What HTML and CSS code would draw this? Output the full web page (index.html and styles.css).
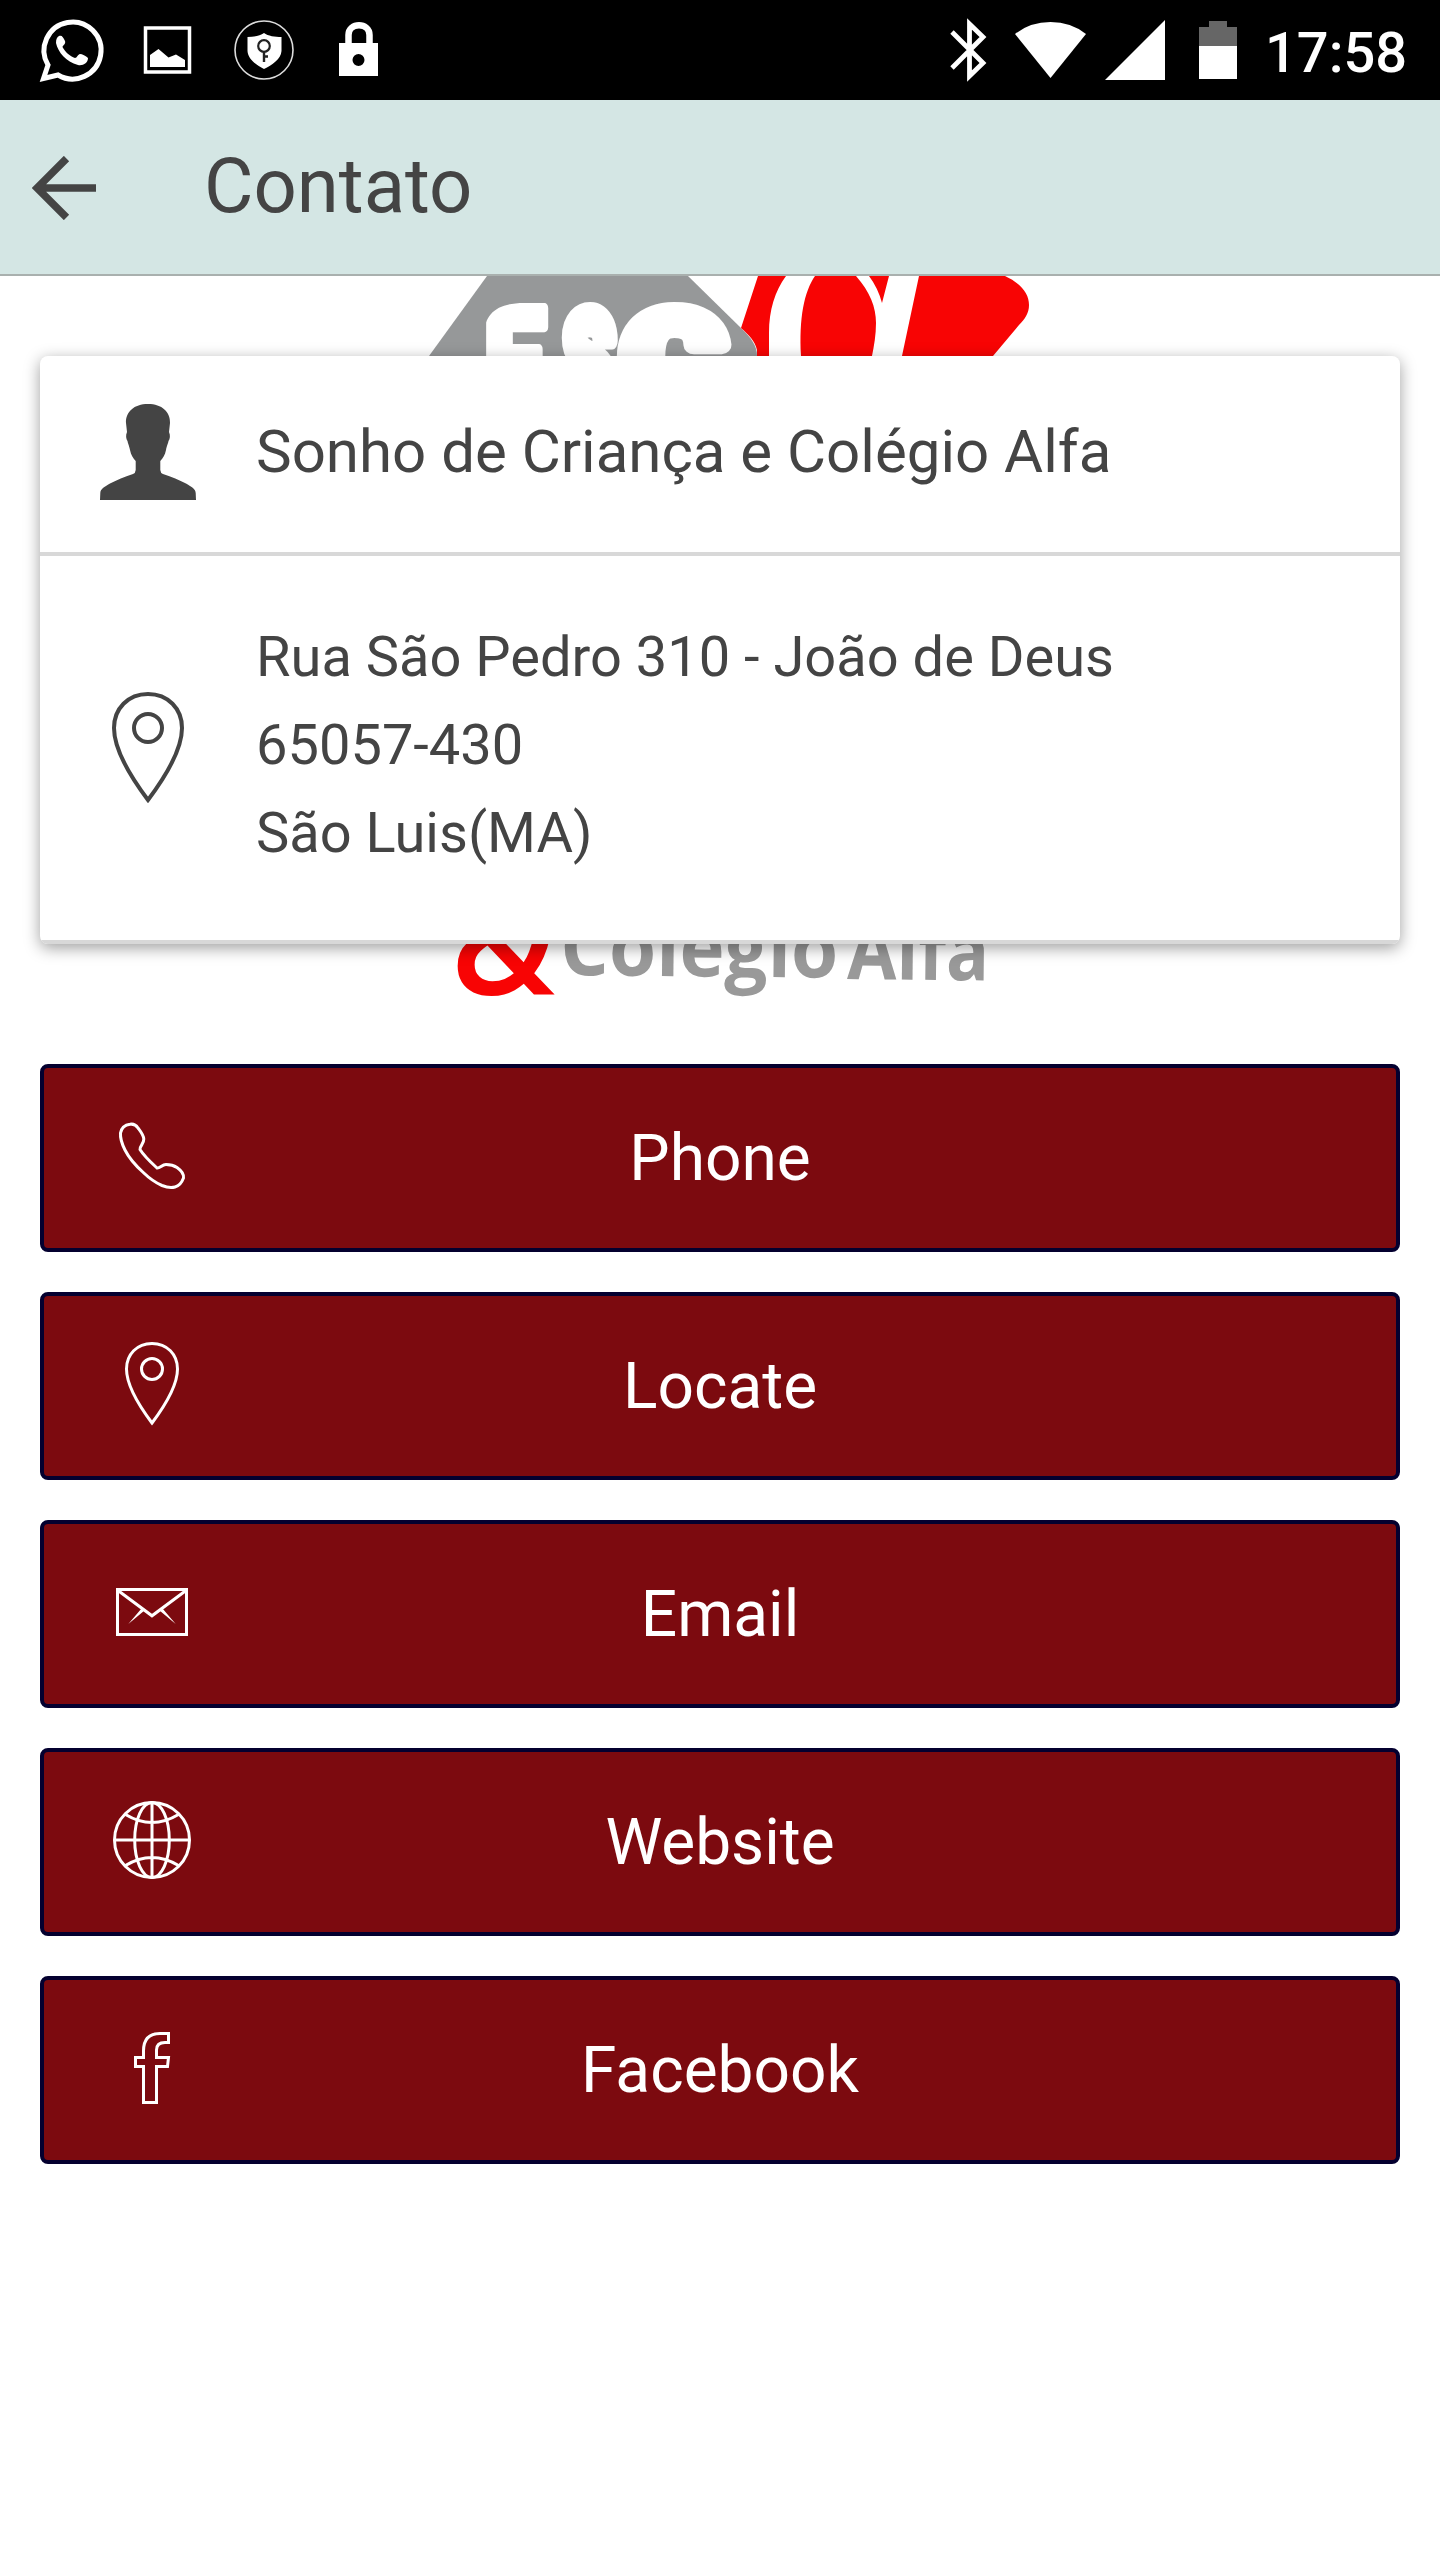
FILE: index.html
```html
<!DOCTYPE html>
<html lang="pt-BR">
<head>
<meta charset="utf-8">
<title>Contato</title>
<link rel="stylesheet" href="styles.css">
</head>
<body>
<div class="status-bar">
  <div class="status-group">
    <svg class="notice" viewBox="24 0 96 100">
      <path d="M43.500 78.500L48 65A28.500 28.500 0 1 1 58 75Z" fill="none" stroke="#fff" stroke-width="5"/>
      <path d="M59 36C62 35 63 37 65 41C66 44 63 45 62.500 47C65 52 70 56 75 58C77 58 78 54 80 54C82 54 86 56 88 58C88 63 83 66 78 65C66 62 58 52 56 43C56 39 57 37 59 36Z" fill="#fff"/>
    </svg>
    <svg class="notice" viewBox="24 0 96 100">
      <path d="M49.500 28H93.500V72H49.500Z" fill="none" stroke="#fff" stroke-width="3.500"/>
      <path d="M54 55L62.500 49L72.500 57.500L80 54.500L89 60V67H54Z" fill="#fff"/>
    </svg>
    <svg class="notice" viewBox="216 0 96 100">
      <circle cx="264" cy="50" r="29" fill="none" stroke="#ddd" stroke-width="1.600"/>
      <path d="M264 33C268 36 275 37 281.500 37V51C281 59 272 65 264 69C256 65 248 59 247.500 51V37C254 37 260 36 264 33Z" fill="#fff"/>
      <circle cx="264" cy="46" r="5.800" fill="none" stroke="#222" stroke-width="2.200"/>
      <path d="M264 52V62M264 56.500H268" stroke="#222" stroke-width="2.400" fill="none"/>
    </svg>
    <svg class="notice" viewBox="312 0 96 100">
      <path d="M348.500 45V35C348.500 22 369.500 22 369.500 35V45" fill="none" stroke="#fff" stroke-width="6.500"/>
      <path fill="#fff" fill-rule="evenodd" d="M339 43H378V76H339ZM358.500 54A6 6 0 1 0 358.500 66A6 6 0 1 0 358.500 54Z"/>
    </svg>
  </div>
  <div class="status-group">
    <svg class="signal" viewBox="926 0 84 100">
      <path d="M952 32L969.500 49.500L983 63L969.500 76V24L983 37L952 68" fill="none" stroke="#fff" stroke-width="4.800"/>
    </svg>
    <svg class="signal" viewBox="1010 0 84 100">
      <path d="M1015 34Q1030 22 1050.500 22T1086 34L1050.500 78Z" fill="#fff"/>
    </svg>
    <svg class="signal" viewBox="1094 0 84 100">
      <path d="M1105 80L1165 20V80Z" fill="#fff"/>
    </svg>
    <svg class="signal" viewBox="1178 0 84 100">
      <path d="M1209 21H1227V27H1237V46H1199V27H1209Z" fill="#666"/>
      <path d="M1199 46H1237V79H1199Z" fill="#fff"/>
    </svg>
    <span class="clock">17:58</span>
  </div>
</div>

<header class="app-bar">
  <svg class="back" viewBox="0 0 64 64"><path d="M34.500 2.500L5 32L34.500 61.500M4 32H64" fill="none" stroke="#444" stroke-width="7.500"/></svg>
  <h1 class="title">Contato</h1>
</header>

<main class="page">
  <svg class="logo" viewBox="400 276 660 764">
    <path d="M487 276H688L741 328C751 338 757 345 757 356V370H420L429 356Z" fill="#969899"/>
    <path d="M758 276H1005C1022 284 1029 294 1029 305C1029 313 1025 319 1019 325L993 356L982 370H757V350C755 341 749 335 741 328Z" fill="#f80404"/>
    <path d="M786 276C775 291 769 310 769 333V370H801V356C799 318 804 292 815 276Z" fill="#fff"/>
    <path d="M856 276C870 292 876 307 876 323C876 335 874 346 872 356L870 370H899L919 276H889L882 303Q878 288 869 276Z" fill="#fff"/>
    <g class="logo-heavy">
      <text x="484" y="411" textLength="62" lengthAdjust="spacingAndGlyphs">E</text>
      <text class="logo-round" x="563" y="408" textLength="52" lengthAdjust="spacingAndGlyphs">S</text>
      <text class="logo-round" x="622" y="408" textLength="103" lengthAdjust="spacingAndGlyphs">C</text>
    </g>
    <path d="M478 298H524V303C499 303 484 312 484 336H478Z" fill="#969899"/>
    <text class="logo-amp" x="451" y="995" textLength="104" lengthAdjust="spacingAndGlyphs">&amp;</text>
    <g class="logo-name" transform="rotate(.6 565 974)">
      <text x="560" y="975" textLength="278" lengthAdjust="spacingAndGlyphs">Colégio</text>
      <text x="847" y="976" textLength="142" lengthAdjust="spacingAndGlyphs">Alfa</text>
    </g>
  </svg>

  <section class="card">
    <div class="row row-name">
      <svg class="person" viewBox="0 0 96 96"><path d="M48 0C34 0 25.500 8 26 19L27 28C25.500 31 26 35 27.500 37C28 40 29 41 30 46C31 51 33 54 35.700 57V66Q35.500 69 33 70C24 73 17 76 10 79.500C4 83 .5 85 .3 89L0 96H96L95.700 89C95.500 85 92 83 86 79.500C79 76 72 73 63 70Q60.500 69 60.300 66V57C63 54 65 51 66 46C67 41 68 40 68.500 37C70 35 70.500 31 69 28L70 19C70.500 8 62 0 48 0Z" fill="#444"/></svg>
      <p class="name">Sonho de Criança e Colégio Alfa</p>
    </div>
    <div class="row row-address">
      <svg class="card-pin" viewBox="0 0 96 96" fill="none" stroke="#444" stroke-width="3"><path d="M48 7.500C33 7.500 22.500 18.500 22.500 33C22.500 49 36 71 48 87C60 71 73.500 49 73.500 33C73.500 18.500 63 7.500 48 7.500Z"/><circle cx="48" cy="33" r="10.500"/></svg>
      <p class="address">Rua São Pedro 310 - João de Deus<br>65057-430<br>São Luis(MA)</p>
    </div>
  </section>

  <nav class="actions">
    <a class="action"><svg class="icon" viewBox="0 0 96 96"><path d="M26 16.300C30 15.500 32 17 34 20C37 24 39.500 27 39.800 31C40 36 35.500 38 36 41.500C40 48 47 54.500 53 60C56 60.500 58 56.500 62 56.500C66 56.500 70 57.500 73 59.500C78 63 80 66 79.500 70C78 74 75 78 71 79C67 80 63 79.500 58 77.500C51 74.500 45 70 39.300 64.500C31 57 25 50 21 42C18 36 16 31 16.500 25C17.500 20 21 17 26 16.300Z"/></svg><span class="label">Phone</span></a>
    <a class="action"><svg class="icon" viewBox="0 0 96 96"><path d="M48 7.500C33 7.500 22.500 18.500 22.500 33C22.500 49 36 71 48 87C60 71 73.500 49 73.500 33C73.500 18.500 63 7.500 48 7.500Z"/><circle cx="48" cy="33" r="10.500"/></svg><span class="label">Locate</span></a>
    <a class="action"><svg class="icon" viewBox="0 0 96 96"><path d="M13.500 25.500H82.500V70.500H13.500ZM14 26.500L48 51.800L82 26.500"/><path class="solid" d="M37.500 44.500L24.300 60L40.500 46.500ZM58.500 44.500L71.700 60L55.500 46.500Z"/></svg><span class="label">Email</span></a>
    <a class="action"><svg class="icon" viewBox="0 0 96 96"><circle cx="48" cy="48" r="37.500"/><ellipse cx="48" cy="48" rx="17.300" ry="37.500"/><path d="M10 48H86M48 10V86M21.500 22.500Q48 38.500 74.500 22.500M21.500 73.500Q48 57.500 74.500 73.500"/></svg><span class="label">Website</span></a>
    <a class="action"><svg class="icon" viewBox="0 0 96 96"><path d="M39.500 82.500V46.500H31.500V37.500H39.500V31C39.500 19 45 13.500 56 13.500H64.500V22.500H61C55 22.500 52.500 25 52.500 30V37.500H64.500L63.500 46.500H52.500V82.500Z"/></svg><span class="label">Facebook</span></a>
  </nav>
</main>
</body>
</html>
```
FILE: styles.css
```css
* { box-sizing: border-box; }
body {
  margin: 0;
  width: 1440px;
  height: 2560px;
  overflow: hidden;
  background: #fff;
  color: #444;
  font-family: Roboto, "Liberation Sans", sans-serif;
}
svg { display: block; flex: none; }

.status-bar {
  display: flex;
  justify-content: space-between;
  height: 100px;
  padding: 0 24px;
  background: #000;
  color: #fff;
}
.status-group { display: flex; align-items: center; }
.notice { width: 96px; height: 100px; }
.signal { width: 84px; height: 100px; }
.clock {
  width: 154px;
  padding: 5px 0 0 3px;
  font-size: 56px;
  font-weight: 500;
  line-height: 66px;
}

.app-bar {
  display: flex;
  align-items: center;
  gap: 108px;
  height: 176px;
  padding: 0 32px;
  background: #d4e6e4;
  border-bottom: 2px solid #a9b0ae;
}
.back { width: 64px; height: 64px; margin-top: 2px; }
.title {
  margin: 0 0 2px;
  font-size: 76px;
  font-weight: 400;
  line-height: 90px;
}

.page {
  position: relative;
  padding: 80px 40px 0;
}
/* The school logo sits behind the card as the page background. */
.logo {
  position: absolute;
  left: 400px;
  top: 0;
  width: 660px;
  height: 764px;
}
.logo-heavy {
  fill: #fff;
  stroke: #fff;
  stroke-width: 10px;
  stroke-linejoin: round;
  font: 900 145px Roboto, sans-serif;
}
.logo-round { font-size: 134px; stroke-width: 18px; }
.logo-amp { fill: #f80404; font: 600 150px "Open Sans", sans-serif; }
.logo-name { fill: #999; font: 700 80px "Open Sans", sans-serif; }

.card {
  position: relative;
  border-radius: 8px;
  background: #fff;
  box-shadow: 0 4px 16px rgba(0, 0, 0, .38);
  overflow: hidden;
}
.row {
  display: flex;
  align-items: center;
  padding-left: 44px;
  gap: 44px;
  border-bottom: 4px solid #d8d8d8;
}
.row-name { height: 200px; }
.row-address { height: 388px; }
.person { width: 96px; height: 96px; margin: 0 16px 4px; }
.card-pin { width: 128px; height: 128px; }
.name { margin: 0 0 5px; font-size: 60px; line-height: 88px; }
.address { margin: 0 0 6px; font-size: 56px; line-height: 88px; }

.actions {
  display: grid;
  gap: 40px;
  margin-top: 120px;
}
.action {
  display: grid;
  grid-template-columns: 96px 1fr 96px;
  align-items: center;
  height: 188px;
  padding: 0 60px;
  border: 4px solid #04002f;
  border-radius: 8px;
  background: #7c0a0f;
  color: #fff;
}
.icon {
  width: 96px;
  height: 96px;
  margin-bottom: 4px;
  fill: none;
  stroke: #fff;
  stroke-width: 3px;
}
.solid { fill: #fff; stroke: none; }
.label { padding-top: 2px; text-align: center; font-size: 64px; line-height: 76px; }
```
